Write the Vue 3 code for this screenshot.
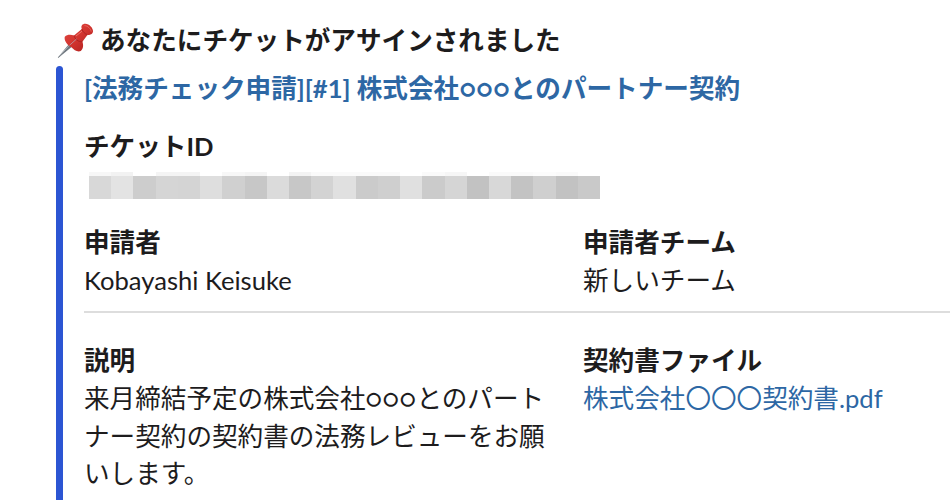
<template>
  <div class="message">
    <div class="message-title">
      <svg class="pin" viewBox="0 0 40 38" aria-hidden="true">
        <defs>
          <linearGradient id="pin-red" x1="0" y1="0" x2="1" y2="1">
            <stop offset="0" stop-color="#e24a43" />
            <stop offset="0.5" stop-color="#d2342f" />
            <stop offset="1" stop-color="#a91d1c" />
          </linearGradient>
        </defs>
        <path d="M1.8 35.6 L13.5 21.5 L16.5 24.2 L2.2 36 Z" fill="#6d757d" />
        <path d="M3.5 33.8 L13.5 23.2" stroke="#c5cbd0" stroke-width="0.7" />
        <path d="M8.8 14.8 C11 12.2 15 12.5 18 13.4 L25.8 7 C24.6 4 26.3 1.8 29.3 1.8 C33.3 1.8 37.4 6.2 37 9.6 C36.6 12.4 34.2 13.3 31.6 12.7 L26.4 19.8 C27.6 23 27.4 26.8 24.8 29 C21.4 30.4 18 28 15.4 25.2 C11.8 24 7.6 18.2 8.8 14.8 Z" fill="url(#pin-red)" />
        <path d="M18 13.4 C18.8 17 22 20 26.4 19.8" fill="none" stroke="#a5201f" stroke-width="0.8" />
        <path d="M25.8 7 C27 10 29 12.2 31.6 12.7" fill="none" stroke="#a5201f" stroke-width="0.8" />
        <path d="M28.5 3.6 C31.5 3.6 35 7 35.2 9.6" fill="none" stroke="#e8665d" stroke-width="1" />
        <path d="M20 14 L26 9.2" stroke="#ec756c" stroke-width="1" />
        <path d="M13.5 23.3 L20.5 17" stroke="#b98a92" stroke-width="1" />
      </svg>
      <span>あなたにチケットがアサインされました</span>
    </div>

    <div class="attachment">
      <div class="bar"></div>
      <div class="body">
        <a class="ticket-link">[法務チェック申請][#1] 株式会社○○○とのパートナー契約</a>

        <div class="label">チケットID</div>
        <div class="mosaic">
          <span
            v-for="(cell, i) in cells"
            :key="i"
            :style="{ background: cell[0], borderTopColor: cell[1] }"
          ></span>
        </div>

        <div class="fields">
          <div>
            <div class="label">申請者</div>
            <div>Kobayashi Keisuke</div>
          </div>
          <div>
            <div class="label">申請者チーム</div>
            <div>新しいチーム</div>
          </div>
        </div>

        <div class="divider"></div>

        <div class="fields">
          <div>
            <div class="label">説明</div>
            <div class="description">来月締結予定の株式会社○○○とのパートナー契約の契約書の法務レビューをお願いします。</div>
          </div>
          <div>
            <div class="label">契約書ファイル</div>
            <a class="file-link">株式会社〇〇〇契約書.pdf</a>
          </div>
        </div>
      </div>
    </div>
  </div>
</template>

<script setup>
// [fill, faint strip above it]
const cells = [
  ['#d8d8d8', '#f7f7f7'],
  ['#e3e3e3', '#f2f2f2'],
  ['#cdcdcd', '#ffffff'],
  ['#d5d5d5', '#f4f4f4'],
  ['#d4d4d4', '#f4f4f4'],
  ['#dedede', '#ffffff'],
  ['#d0d0d0', '#f7f7f7'],
  ['#c7c7c7', '#f4f4f4'],
  ['#dbdbdb', '#ffffff'],
  ['#c7c7c7', '#f3f3f3'],
  ['#d3d3d3', '#fafafa'],
  ['#e0e0e0', '#fafafa'],
  ['#cbcbcb', '#fafafa'],
  ['#cfcfcf', '#fafafa'],
  ['#e0e0e0', '#ffffff'],
  ['#cbcbcb', '#fafafa'],
  ['#d5d5d5', '#f6f6f6'],
  ['#c2c2c2', '#ffffff'],
  ['#d8d8d8', '#fafafa'],
  ['#c3c3c3', '#fafafa'],
  ['#cfcfcf', '#fcfcfc'],
  ['#c2c2c2', '#fafafa'],
  ['#c9c9c9', '#ffffff'],
]
</script>

<style>
body {
  background: #fff;
  overflow: hidden;
}
</style>

<style scoped>
.message {
  box-sizing: border-box;
  height: 500px;
  padding: 22px 0 0 56px;
  overflow: hidden;
  color: #1d1c1d;
  font-family: Lato, "Noto Sans CJK JP", sans-serif;
  font-size: 25.6px;
  line-height: 37.6px;
}

.message-title {
  display: flex;
  height: 44px;
  font-weight: 700;
  white-space: nowrap;
}

.pin {
  flex: none;
  width: 40px;
  height: 38px;
  margin-right: 4px;
}

.attachment {
  display: flex;
  height: 480px;
}

.bar {
  flex: none;
  width: 7px;
  border-radius: 4px;
  background: #2c55d3;
}

.body {
  flex: 1;
  min-width: 0;
  padding: 4px 0 0 21px;
}

.ticket-link {
  display: block;
  margin-bottom: 20px;
  color: #2d67a4;
  font-weight: 700;
  white-space: nowrap;
}

.file-link {
  color: #2d67a4;
}

.label {
  font-weight: 700;
}

.mosaic {
  display: flex;
  width: 511px;
  margin: 7px 0 25px 5px;
}

.mosaic span {
  flex: 1;
  height: 23px;
  border-top: 4px solid;
}

.fields {
  display: grid;
  grid-template-columns: 499px 1fr;
}

.divider {
  height: 2px;
  margin: 12px 0 29px;
  background: #dddddd;
}

.description {
  width: 474px;
}
</style>
